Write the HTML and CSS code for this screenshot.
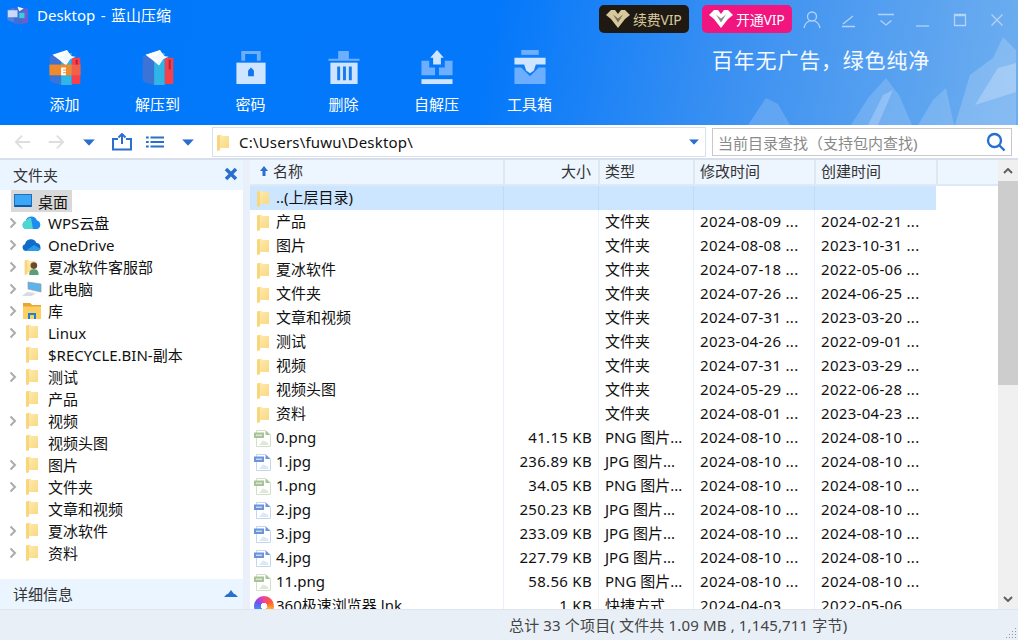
FILE: index.html
```html
<!DOCTYPE html>
<html lang="zh-CN">
<head>
<meta charset="utf-8">
<title>Desktop - 蓝山压缩</title>
<link rel="stylesheet" href="styles.css">
</head>
<body>
<svg class="sprite" aria-hidden="true">
  <defs>
    <linearGradient id="fy" x1="0" y1="0" x2="1" y2="1"><stop offset="0" stop-color="#fdeeb6"/><stop offset="1" stop-color="#fad67c"/></linearGradient>
    <symbol id="folder" viewBox="0 0 12 17">
      <path d="M0 1.500 5 0.500 5 2 12 2 12 14 3 14 3 16 0.800 17 0 16Z" fill="url(#fy)"/>
      <path d="M0 1.500 3 1 3 16 0.800 17 0 16Z" fill="#f9d67c"/>
    </symbol>
    <symbol id="doc-png" viewBox="0 0 17 17">
      <path d="M2.500 .5H11.500L16.500 5V16.500H2.500Z" fill="#fff" stroke="#d3dfc8"/>
      <path d="M11.500 .5 16.500 5H11.500Z" fill="#a9c296"/>
      <rect x="0" y="2.500" width="10" height="5.500" fill="#a9c296"/>
      <rect x="2" y="4.500" width="6" height="1.500" fill="#dbe6d0"/>
      <path d="M5 15 9 10.500 13 12 15 15Z" fill="#dfe9da"/>
    </symbol>
    <symbol id="doc-jpg" viewBox="0 0 17 17">
      <path d="M2.500 .5H11.500L16.500 5V16.500H2.500Z" fill="#fff" stroke="#c5d6f0"/>
      <path d="M11.500 .5 16.500 5H11.500Z" fill="#6a95dd"/>
      <rect x="0" y="2.500" width="10" height="5.500" fill="#6a95dd"/>
      <rect x="2" y="4.500" width="6" height="1.500" fill="#c5d6f2"/>
      <path d="M5 15 9 10.500 13 12 15 15Z" fill="#dce8f6"/>
    </symbol>
    <symbol id="chev" viewBox="0 0 8 12"><path d="M1.500 1.500 6 6 1.500 10.500" fill="none" stroke="#ababab" stroke-width="2"/></symbol>
    <symbol id="caret" viewBox="0 0 13 7"><path d="M0 0H13L6.500 7Z" fill="#2a6fd0"/></symbol>
    <symbol id="gem" viewBox="0 0 24 18">
      <path d="M0 5 5 0H9L12 4 15 0H19L24 5 19 9 12 18 5 9Z" fill="currentColor"/>
      <path d="M7 4.500 12 12.500 17 4.500 12 8.500Z" fill="#000" opacity=".45"/>
    </symbol>
    <symbol id="cube" viewBox="0 0 32 36">
      <path d="M0 7 12 3V36L2 33 0 31Z" fill="#3c74d6"/>
      <path d="M12 3H23V36H12Z" fill="#2fb5e6"/>
      <path d="M23 8H32V35H23Z" fill="#f5414c"/>
      <path d="M27 10H29V20H27Z" fill="#b32038"/>
      <path d="M3 5 18 0 23 7 17 16 10 10Z" fill="#fff"/>
      <path d="M18 0 20 6 27 7 20 10 17 16 15 9 8 7 15 6Z" fill="#f2f7ff"/>
    </symbol>
  </defs>
</svg>

<div class="app">
  <header class="head">
    <svg class="peaks" viewBox="0 0 340 125" aria-hidden="true">
      <path d="M70 125 88 98 100 104 112 125Z" fill="#fff" opacity=".16"/>
      <path d="M173 125 190 98 208 78 221 95 234 125Z" fill="#fff" opacity=".16"/>
      <path d="M190 125 205 95 215 90 200 125Z" fill="#fff" opacity=".22"/>
      <path d="M240 125 255 100 268 88 276 125Z" fill="#fff" opacity=".16"/>
      <path d="M277 125 292 75 315 58 325 37 338 50 338 125Z" fill="#fff" opacity=".18"/>
      <path d="M297 105 320 68 338 63V92Z" fill="#fff" opacity=".24"/>
    </svg>
    <div class="titlebar">
      <svg class="app-logo" viewBox="0 0 24 24">
        <path d="M0 6 8 3V20L2 18 0 16Z" fill="#4f7fe0"/>
        <path d="M8 3H17V22H8Z" fill="#3f6fd2"/>
        <path d="M17 4H24V20L17 22Z" fill="#6a5fd0"/>
        <path d="M1 6H12V14H1Z" fill="#dfeaff" opacity=".85"/>
        <path d="M12 2 19 4 14 7Z" fill="#fff"/>
        <path d="M14 9H20V15H14Z" fill="#35d0d8"/>
      </svg>
      <span class="app-title">Desktop - 蓝山压缩</span>
      <div class="title-actions">
        <span class="vip vip-dark"><svg class="gem" viewBox="0 0 24 18"><use href="#gem"/></svg>续费VIP</span>
        <span class="vip vip-pink"><svg class="gem" viewBox="0 0 24 18"><use href="#gem"/></svg>开通VIP</span>
        <div class="win-btns">
          <svg class="win-btn" viewBox="0 0 18 18"><circle cx="9" cy="5.500" r="4.500"/><path d="M1 17C2 12 5 10.500 6.500 10M17 17C16 12 13 10.500 11.500 10"/></svg>
          <svg class="win-btn" viewBox="0 0 18 18"><path d="M3 13 13 5M2 15.500H15"/></svg>
          <svg class="win-btn" viewBox="0 0 18 18"><path d="M1 3.500H17M3.500 9.500 9 14 14.500 9.500"/></svg>
          <svg class="win-btn" viewBox="0 0 18 18"><path d="M2 15H15"/></svg>
          <svg class="win-btn" viewBox="0 0 18 18"><path d="M3.500 3.500H14.500V14.500H3.500ZM3.500 4.500H14.500"/></svg>
          <svg class="win-btn" viewBox="0 0 18 18"><path d="M3.500 3.500 14.500 14.500M14.500 3.500 3.500 14.500"/></svg>
        </div>
      </div>
    </div>
    <div class="tools">
      <div class="tool">
        <svg class="tool-ico" viewBox="0 0 32 36"><use href="#cube"/><rect x="0" y="15" width="23" height="11" fill="#f08a2c"/><rect x="23" y="15" width="9" height="11" fill="#f0604a"/><path d="M12 18H17V20H14V21H17V23H14V24H17V26H12Z" fill="#fff"/></svg>
        <span>添加</span>
      </div>
      <div class="tool">
        <svg class="tool-ico" viewBox="0 0 32 36"><use href="#cube"/></svg>
        <span>解压到</span>
      </div>
      <div class="tool">
        <svg class="tool-ico" viewBox="0 0 32 36">
          <path d="M6 11V1H26V11H22V4H10V11Z" fill="#6eaeff"/>
          <rect x="1" y="13" width="30" height="22" fill="#cfe4ff"/>
          <path d="M13 21 16 18 19 21V27H13Z" fill="#0f76ee"/>
        </svg>
        <span>密码</span>
      </div>
      <div class="tool">
        <svg class="tool-ico" viewBox="0 0 32 36">
          <path d="M0 9 10 9V1H21V9H32V11H0Z" fill="#6eaeff"/>
          <path d="M2 13H30V35H2Z" fill="#cfe4ff"/>
          <path d="M9 17H12V31H9ZM15 17H18V31H15ZM21 17H24V31H21Z" fill="#177bee"/>
        </svg>
        <span>删除</span>
      </div>
      <div class="tool">
        <svg class="tool-ico" viewBox="0 0 32 36">
          <path d="M0 11H8V18H14V26H0ZM32 11H24V18H18V26H32Z" fill="#6eaeff"/>
          <rect x="0" y="30" width="32" height="5" fill="#cfe4ff"/>
          <path d="M16 0 23 8H20V15H12V8H9Z" fill="#cfe4ff"/>
        </svg>
        <span>自解压</span>
      </div>
      <div class="tool">
        <svg class="tool-ico" viewBox="0 0 32 36">
          <rect x="7" y="0" width="18" height="5" fill="#6eaeff"/>
          <path d="M0 18H7L16 27 25 18H32V35H0Z" fill="#6eaeff"/>
          <path d="M0 8H32V15H22L20 21 16 24 12 21 10 15H0Z" fill="#cfe4ff"/>
        </svg>
        <span>工具箱</span>
      </div>
      <div class="slogan">百年无广告，绿色纯净</div>
    </div>
  </header>

  <div class="navbar">
    <div class="nav-btns">
      <svg class="nav-arrow nav-back" viewBox="0 0 20 18"><path d="M18 9H2M9 2 2 9 9 16"/></svg>
      <svg class="nav-arrow nav-fwd" viewBox="0 0 20 18"><path d="M2 9H18M11 2 18 9 11 16"/></svg>
      <svg class="caret-ico" viewBox="0 0 13 7"><use href="#caret"/></svg>
      <svg class="nav-ico nav-share" viewBox="0 0 20 18"><path d="M6 6H1V16.500H19V6H14M10 11V2M6.500 4.500 10 1 13.500 4.500" /></svg>
      <svg class="nav-ico nav-list" viewBox="0 0 20 14"><path d="M0 2H3M5 2H20M0 7H3M5 7H20M0 12H3M5 12H20"/></svg>
      <svg class="caret-ico" viewBox="0 0 13 7"><use href="#caret"/></svg>
    </div>
    <div class="address">
      <svg class="addr-folder" viewBox="0 0 12 17"><use href="#folder"/></svg>
      <span class="addr-text">C:\Users\fuwu\Desktop\</span>
      <svg class="addr-caret" viewBox="0 0 13 7"><use href="#caret"/></svg>
    </div>
    <div class="search">
      <span class="search-text">当前目录查找（支持包内查找)</span>
      <svg class="search-ico" viewBox="0 0 20 20"><circle cx="8.500" cy="8.500" r="6.500"/><path d="M13.500 13.500 18.500 18.500"/></svg>
    </div>
  </div>

  <main class="body">
    <aside class="side">
      <div class="side-head"><span>文件夹</span>
        <svg class="side-x" viewBox="0 0 14 14"><path d="M2 2 12 12M12 2 2 12"/></svg>
      </div>
      <div class="tree">
        <div class="desk-row"><span class="desk-sel">
          <svg class="desk-ico" viewBox="0 0 18 14"><rect x=".5" y=".5" width="17" height="12" fill="#3ba7f5" stroke="#1d70c0"/><rect x="1" y="11" width="16" height="2" fill="#0d5aa8"/></svg>
          桌面</span></div>
        <div class="node"><svg class="chev"><use href="#chev"/></svg>
          <svg class="node-ico" viewBox="0 0 20 14"><path d="M4 13A4 4 0 0 1 3.500 5.200 6 6 0 0 1 15 4.500 4.500 4.500 0 0 1 15.500 13Z" fill="#1e8df0"/><path d="M4 13A4 4 0 0 1 3.500 5.200 6 6 0 0 1 9 2L11 13Z" fill="#4fd6d0"/></svg>
          WPS云盘</div>
        <div class="node"><svg class="chev"><use href="#chev"/></svg>
          <svg class="node-ico" viewBox="0 0 20 14"><path d="M3.500 13A3.500 3.500 0 0 1 3 6.200 6 6 0 0 1 14.500 5 4.200 4.200 0 0 1 16 13Z" fill="#0f6cc8"/><path d="M3.500 13 12 7 19 11 16 13Z" fill="#2b9be8"/></svg>
          OneDrive</div>
        <div class="node"><svg class="chev"><use href="#chev"/></svg>
          <svg class="node-ico" viewBox="0 0 18 17"><use href="#folder" width="12" height="17" x="1"/><circle cx="11" cy="7" r="3.500" fill="#6a4a32"/><path d="M6 17C6 12 8 11 11 11S16 12 16 17Z" fill="#5d9e7a"/></svg>
          夏冰软件客服部</div>
        <div class="node"><svg class="chev"><use href="#chev"/></svg>
          <svg class="node-ico" viewBox="0 0 20 16"><path d="M6 1 19 3V11L6 8Z" fill="#5bb4ea" stroke="#8f9db0" stroke-width=".7"/><path d="M0 15 5 11 14 12 10 15Z" fill="#d7dce2"/></svg>
          此电脑</div>
        <div class="node"><svg class="chev"><use href="#chev"/></svg>
          <svg class="node-ico" viewBox="0 0 18 16"><path d="M0 0H7L9 2H18V16H0Z" fill="#fccf62"/><path d="M0 0H7L9 2H18V3.500H0Z" fill="#e8a531"/><path d="M5 16V10H13V16H11V12H7V16Z" fill="#1b82d6"/></svg>
          库</div>
        <div class="node"><svg class="chev"><use href="#chev"/></svg><svg class="node-ico node-folder" viewBox="0 0 12 17"><use href="#folder"/></svg>Linux</div>
        <div class="node"><span class="chev"></span><svg class="node-ico node-folder" viewBox="0 0 12 17"><use href="#folder"/></svg>$RECYCLE.BIN-副本</div>
        <div class="node"><svg class="chev"><use href="#chev"/></svg><svg class="node-ico node-folder" viewBox="0 0 12 17"><use href="#folder"/></svg>测试</div>
        <div class="node"><span class="chev"></span><svg class="node-ico node-folder" viewBox="0 0 12 17"><use href="#folder"/></svg>产品</div>
        <div class="node"><svg class="chev"><use href="#chev"/></svg><svg class="node-ico node-folder" viewBox="0 0 12 17"><use href="#folder"/></svg>视频</div>
        <div class="node"><span class="chev"></span><svg class="node-ico node-folder" viewBox="0 0 12 17"><use href="#folder"/></svg>视频头图</div>
        <div class="node"><svg class="chev"><use href="#chev"/></svg><svg class="node-ico node-folder" viewBox="0 0 12 17"><use href="#folder"/></svg>图片</div>
        <div class="node"><svg class="chev"><use href="#chev"/></svg><svg class="node-ico node-folder" viewBox="0 0 12 17"><use href="#folder"/></svg>文件夹</div>
        <div class="node"><span class="chev"></span><svg class="node-ico node-folder" viewBox="0 0 12 17"><use href="#folder"/></svg>文章和视频</div>
        <div class="node"><svg class="chev"><use href="#chev"/></svg><svg class="node-ico node-folder" viewBox="0 0 12 17"><use href="#folder"/></svg>夏冰软件</div>
        <div class="node"><svg class="chev"><use href="#chev"/></svg><svg class="node-ico node-folder" viewBox="0 0 12 17"><use href="#folder"/></svg>资料</div>
      </div>
      <div class="side-foot"><span>详细信息</span>
        <svg class="side-up" viewBox="0 0 14 8"><path d="M0 8 3 5H4L7 1 10 5H11L14 8Z"/></svg>
      </div>
    </aside>

    <section class="list">
      <div class="list-main">
        <div class="row row-head">
          <div class="cell cell-name"><svg class="sort-up" viewBox="0 0 8 10"><path d="M4 0 8 5H5.500V10H2.500V5H0Z"/></svg>名称</div>
          <div class="cell cell-size">大小</div>
          <div class="cell">类型</div>
          <div class="cell">修改时间</div>
          <div class="cell">创建时间</div>
        </div>
        <div class="rows">
          <div class="row row-sel"><div class="cell cell-name"><svg class="f-ico f-folder" viewBox="0 0 12 17"><use href="#folder"/></svg>..(上层目录)</div><div class="cell cell-size"></div><div class="cell"></div><div class="cell"></div><div class="cell"></div></div>
          <div class="row"><div class="cell cell-name"><svg class="f-ico f-folder" viewBox="0 0 12 17"><use href="#folder"/></svg>产品</div><div class="cell cell-size"></div><div class="cell">文件夹</div><div class="cell cell-num">2024-08-09 ...</div><div class="cell cell-num">2024-02-21 ...</div></div>
          <div class="row"><div class="cell cell-name"><svg class="f-ico f-folder" viewBox="0 0 12 17"><use href="#folder"/></svg>图片</div><div class="cell cell-size"></div><div class="cell">文件夹</div><div class="cell cell-num">2024-08-08 ...</div><div class="cell cell-num">2023-10-31 ...</div></div>
          <div class="row"><div class="cell cell-name"><svg class="f-ico f-folder" viewBox="0 0 12 17"><use href="#folder"/></svg>夏冰软件</div><div class="cell cell-size"></div><div class="cell">文件夹</div><div class="cell cell-num">2024-07-18 ...</div><div class="cell cell-num">2022-05-06 ...</div></div>
          <div class="row"><div class="cell cell-name"><svg class="f-ico f-folder" viewBox="0 0 12 17"><use href="#folder"/></svg>文件夹</div><div class="cell cell-size"></div><div class="cell">文件夹</div><div class="cell cell-num">2024-07-26 ...</div><div class="cell cell-num">2024-06-25 ...</div></div>
          <div class="row"><div class="cell cell-name"><svg class="f-ico f-folder" viewBox="0 0 12 17"><use href="#folder"/></svg>文章和视频</div><div class="cell cell-size"></div><div class="cell">文件夹</div><div class="cell cell-num">2024-07-31 ...</div><div class="cell cell-num">2023-03-20 ...</div></div>
          <div class="row"><div class="cell cell-name"><svg class="f-ico f-folder" viewBox="0 0 12 17"><use href="#folder"/></svg>测试</div><div class="cell cell-size"></div><div class="cell">文件夹</div><div class="cell cell-num">2023-04-26 ...</div><div class="cell cell-num">2022-09-01 ...</div></div>
          <div class="row"><div class="cell cell-name"><svg class="f-ico f-folder" viewBox="0 0 12 17"><use href="#folder"/></svg>视频</div><div class="cell cell-size"></div><div class="cell">文件夹</div><div class="cell cell-num">2024-07-31 ...</div><div class="cell cell-num">2023-03-29 ...</div></div>
          <div class="row"><div class="cell cell-name"><svg class="f-ico f-folder" viewBox="0 0 12 17"><use href="#folder"/></svg>视频头图</div><div class="cell cell-size"></div><div class="cell">文件夹</div><div class="cell cell-num">2024-05-29 ...</div><div class="cell cell-num">2022-06-28 ...</div></div>
          <div class="row"><div class="cell cell-name"><svg class="f-ico f-folder" viewBox="0 0 12 17"><use href="#folder"/></svg>资料</div><div class="cell cell-size"></div><div class="cell">文件夹</div><div class="cell cell-num">2024-08-01 ...</div><div class="cell cell-num">2023-04-23 ...</div></div>
          <div class="row"><div class="cell cell-name"><svg class="f-ico" viewBox="0 0 17 17"><use href="#doc-png"/></svg>0.png</div><div class="cell cell-size cell-num">41.15 KB</div><div class="cell">PNG 图片...</div><div class="cell cell-num">2024-08-10 ...</div><div class="cell cell-num">2024-08-10 ...</div></div>
          <div class="row"><div class="cell cell-name"><svg class="f-ico" viewBox="0 0 17 17"><use href="#doc-jpg"/></svg>1.jpg</div><div class="cell cell-size cell-num">236.89 KB</div><div class="cell">JPG 图片...</div><div class="cell cell-num">2024-08-10 ...</div><div class="cell cell-num">2024-08-10 ...</div></div>
          <div class="row"><div class="cell cell-name"><svg class="f-ico" viewBox="0 0 17 17"><use href="#doc-png"/></svg>1.png</div><div class="cell cell-size cell-num">34.05 KB</div><div class="cell">PNG 图片...</div><div class="cell cell-num">2024-08-10 ...</div><div class="cell cell-num">2024-08-10 ...</div></div>
          <div class="row"><div class="cell cell-name"><svg class="f-ico" viewBox="0 0 17 17"><use href="#doc-jpg"/></svg>2.jpg</div><div class="cell cell-size cell-num">250.23 KB</div><div class="cell">JPG 图片...</div><div class="cell cell-num">2024-08-10 ...</div><div class="cell cell-num">2024-08-10 ...</div></div>
          <div class="row"><div class="cell cell-name"><svg class="f-ico" viewBox="0 0 17 17"><use href="#doc-jpg"/></svg>3.jpg</div><div class="cell cell-size cell-num">233.09 KB</div><div class="cell">JPG 图片...</div><div class="cell cell-num">2024-08-10 ...</div><div class="cell cell-num">2024-08-10 ...</div></div>
          <div class="row"><div class="cell cell-name"><svg class="f-ico" viewBox="0 0 17 17"><use href="#doc-jpg"/></svg>4.jpg</div><div class="cell cell-size cell-num">227.79 KB</div><div class="cell">JPG 图片...</div><div class="cell cell-num">2024-08-10 ...</div><div class="cell cell-num">2024-08-10 ...</div></div>
          <div class="row"><div class="cell cell-name"><svg class="f-ico" viewBox="0 0 17 17"><use href="#doc-png"/></svg>11.png</div><div class="cell cell-size cell-num">58.56 KB</div><div class="cell">PNG 图片...</div><div class="cell cell-num">2024-08-10 ...</div><div class="cell cell-num">2024-08-10 ...</div></div>
          <div class="row"><div class="cell cell-name"><span class="ico-360"></span>360极速浏览器.lnk</div><div class="cell cell-size cell-num">1 KB</div><div class="cell">快捷方式</div><div class="cell cell-num">2024-04-03 ...</div><div class="cell cell-num">2022-05-06 ...</div></div>
        </div>
      </div>
      <div class="scroll">
        <div class="scroll-btn"><svg viewBox="0 0 10 6"><path d="M1 5 5 1 9 5"/></svg></div>
        <div class="scroll-thumb"></div>
        <div class="scroll-fill"></div>
        <div class="scroll-btn"><svg viewBox="0 0 10 6"><path d="M1 1 5 5 9 1"/></svg></div>
      </div>
    </section>
  </main>

  <footer class="status">
    <span>总计 33 个项目( 文件共 1.09 MB , 1,145,711 字节)</span>
    <svg class="grip" viewBox="0 0 12 12"><path d="M10 1h1v1h-1zM7 4h1v1H7zM10 4h1v1h-1zM4 7h1v1H4zM7 7h1v1H7zM10 7h1v1h-1zM1 10h1v1H1zM4 10h1v1H4zM7 10h1v1H7zM10 10h1v1h-1z"/></svg>
  </footer>
</div>
</body>
</html>
```

FILE: styles.css
```css
* { box-sizing: border-box; }
html, body { margin: 0; padding: 0; }
body {
  width: 1018px;
  height: 640px;
  overflow: hidden;
  font-family: "Noto Sans", "Noto Sans CJK SC", sans-serif;
  font-size: 15px;
  color: #111;
  background: #e9eff7;
}
.sprite { width: 0; height: 0; display: block; }
.app { width: 1018px; height: 640px; display: flex; flex-direction: column; overflow: hidden; }

/* header */
.head {
  position: relative;
  height: 125px;
  flex: none;
  background: linear-gradient(100deg, #0078fb 0%, #0478fa 48%, #3c91f1 72%, #6eaeef 100%);
  color: #fff;
}
.peaks { position: absolute; right: 0; top: 0; width: 340px; height: 125px; }
.titlebar { position: relative; height: 33px; padding: 4px 0 0 7px; display: flex; align-items: flex-start; }
.app-logo { width: 21px; height: 23px; }
.app-title { margin-left: 9px; font-size: 15px; line-height: 22px; word-spacing: 1.500px; }
.title-actions { margin: 1px 0 0 auto; display: flex; align-items: flex-start; }
.vip { width: 90px; height: 28px; border-radius: 5px; display: flex; align-items: center; padding-left: 7px; font-size: 14px; white-space: nowrap; letter-spacing: -.2px; }
.vip-dark { background: #1e1a13; color: #d8c89c; margin-right: 13px; }
.vip-pink { background: #f0157f; color: #fff; }
.gem { width: 24px; height: 18px; margin-right: 3px; flex: none; }
.win-btns { display: flex; gap: 19px; margin: 6px 12px 0 11px; }
.win-btn { width: 18px; height: 18px; fill: none; stroke: #b4d3f6; stroke-width: 1.300; }

.tools { position: relative; display: flex; padding: 17px 0 0 18px; }
.tool { width: 93px; display: flex; flex-direction: column; align-items: center; font-size: 15px; }
.tool-ico { width: 32px; height: 35px; }
.tool span { margin-top: 8px; line-height: 22px; }
.slogan {
  margin-left: 136px;
  margin-top: -7px;
  font-family: "Noto Sans CJK SC", sans-serif;
  font-size: 21px;
  line-height: 32px;
  letter-spacing: .800px;
  white-space: nowrap;
  color: #f4f9ff;
}

/* nav bar */
.navbar { height: 35px; flex: none; display: flex; align-items: flex-start; background: #fff; border-bottom: 2px solid #d8dfea; padding-top: 2px; }
.nav-btns { width: 212px; flex: none; display: flex; align-items: center; height: 30px; padding-left: 14px; }
.nav-arrow { width: 18px; height: 18px; fill: none; stroke: #dedede; stroke-width: 2; flex: none; }
.nav-back { margin-right: 15px; }
.nav-fwd { margin-right: 18px; }
.caret-ico { width: 12px; height: 7px; flex: none; }
.nav-ico { fill: none; stroke: #2a6fd0; stroke-width: 2; flex: none; }
.nav-share { width: 20px; height: 18px; margin: 0 14px 0 17px; }
.nav-list { width: 18px; height: 14px; margin-right: 18px; }
.address { width: 494px; height: 30px; flex: none; display: flex; align-items: center; background: #fff; border: 1px solid #d5e1ef; padding: 0 6px 0 4px; }
.addr-folder { width: 12px; height: 17px; flex: none; }
.addr-text { margin-left: 10px; flex: 1; font-size: 15px; letter-spacing: .2px; white-space: nowrap; }
.addr-caret { width: 10px; height: 6px; flex: none; }
.search { width: 300px; height: 28px; margin: 1px 0 0 6px; flex: none; display: flex; align-items: center; justify-content: space-between; border: 1px solid #c9c9c9; padding: 0 5px; }
.search-text { color: #8a8a8a; font-size: 15px; white-space: nowrap; }
.search-ico { width: 20px; height: 20px; fill: none; stroke: #2a6fd0; stroke-width: 2.400; flex: none; }

/* body */
.body { flex: 1; min-height: 0; display: flex; background: #e9f0f9; }
.side { width: 243px; flex: none; display: flex; flex-direction: column; background: #fff; height: 449px; }
.side-head, .side-foot { height: 30px; flex: none; display: flex; align-items: center; justify-content: space-between; background: #ebf5ff; padding: 0 3px 2px 13px; color: #333; font-size: 15px; }
.side-x { width: 14px; height: 14px; fill: none; stroke: #2a6fd0; stroke-width: 3.500; margin-right: 2px; }
.side-up { width: 14px; height: 8px; fill: #2a6fd0; margin-right: 2px; }
.tree { flex: 1; min-height: 0; overflow: hidden; }
.desk-row { height: 22px; padding-left: 11px; }
.desk-sel { display: inline-flex; align-items: center; height: 22px; width: 61px; background: #d9d9d9; padding-left: 3px; }
.desk-ico { width: 18px; height: 14px; margin-right: 6px; }
.node { height: 22px; display: flex; align-items: center; white-space: nowrap; padding: 0 0 1px 9px; font-size: 15px; }
.chev { width: 8px; height: 12px; flex: none; }
.node-ico { width: 20px; height: 16px; margin: 0 6px 0 5px; flex: none; }
.node-folder { height: 17px; }

.list { flex: 1; min-width: 0; margin-left: 7px; display: flex; background: #fff; height: 449px; }
.list-main { width: 748px; flex: none; overflow: hidden; }
.row { display: grid; grid-template-columns: 253px 95px 95px 121px 122px 62px; height: 24px; align-items: stretch; }
.cell { padding: 0 0 2px 6px; line-height: 22px; white-space: nowrap; overflow: hidden; border-left: 1px solid #e9f1fb; display: flex; align-items: center; font-size: 15px; }
.cell-name { padding-left: 5px; border-left: 0; }
.cell-size { justify-content: flex-end; padding: 0 6px 2px 0; }
.cell-num { letter-spacing: .3px; }
.row-head { background: #edf5ff; height: 26px; border-bottom: 2px solid #dde9f7; color: #333; }
.row-head .cell { border-left: 2px solid #dfe7f1; padding-left: 5px; }
.row-head .cell-name { border-left: 0; padding-left: 10px; }
.row-head .cell-size { padding: 0 7px 2px 0; }
.row-head::after { content: ""; border-left: 2px solid #dfe7f1; }
.row-sel { background: #cde6ff; }
.row-sel .cell { border-left-color: #bcdcfb; }
.row:not(.row-head)::after { content: ""; background: #fff; }
.sort-up { width: 8px; height: 10px; fill: #2a6fd0; margin-right: 5px; flex: none; }
.f-ico { width: 17px; height: 17px; margin: 2px 5px 0 -1px; flex: none; }
.f-folder { width: 12px; margin: 2px 7px 0 2px; }
.ico-360 { width: 20px; height: 20px; margin: 2px 2px 0 -1px; flex: none; border-radius: 50%; background: radial-gradient(circle, #fff 0 22%, transparent 23%), conic-gradient(#f7409a, #ff5c3a, #ffb52e, #49c466, #2f9bf0, #7c4df0, #f7409a); }
.scroll { width: 20px; flex: none; margin-left: auto; display: flex; flex-direction: column; background: #f0f0f0; }
.scroll-btn { height: 21px; display: flex; align-items: center; justify-content: center; flex: none; }
.scroll-btn svg { width: 10px; height: 6px; fill: none; stroke: #606060; stroke-width: 2; }
.scroll-thumb { height: 204px; flex: none; background: #cdcdcd; }
.scroll-fill { flex: 1; }

/* status */
.status { height: 31px; flex: none; position: relative; display: flex; align-items: center; padding: 0 0 2px 509px; background: #e9eff7; border-top: 1px solid #dfe5ee; color: #444; font-size: 15px; letter-spacing: .15px; }
.grip { position: absolute; right: 1px; bottom: 1px; width: 12px; height: 12px; fill: #9a9a9a; }
```
